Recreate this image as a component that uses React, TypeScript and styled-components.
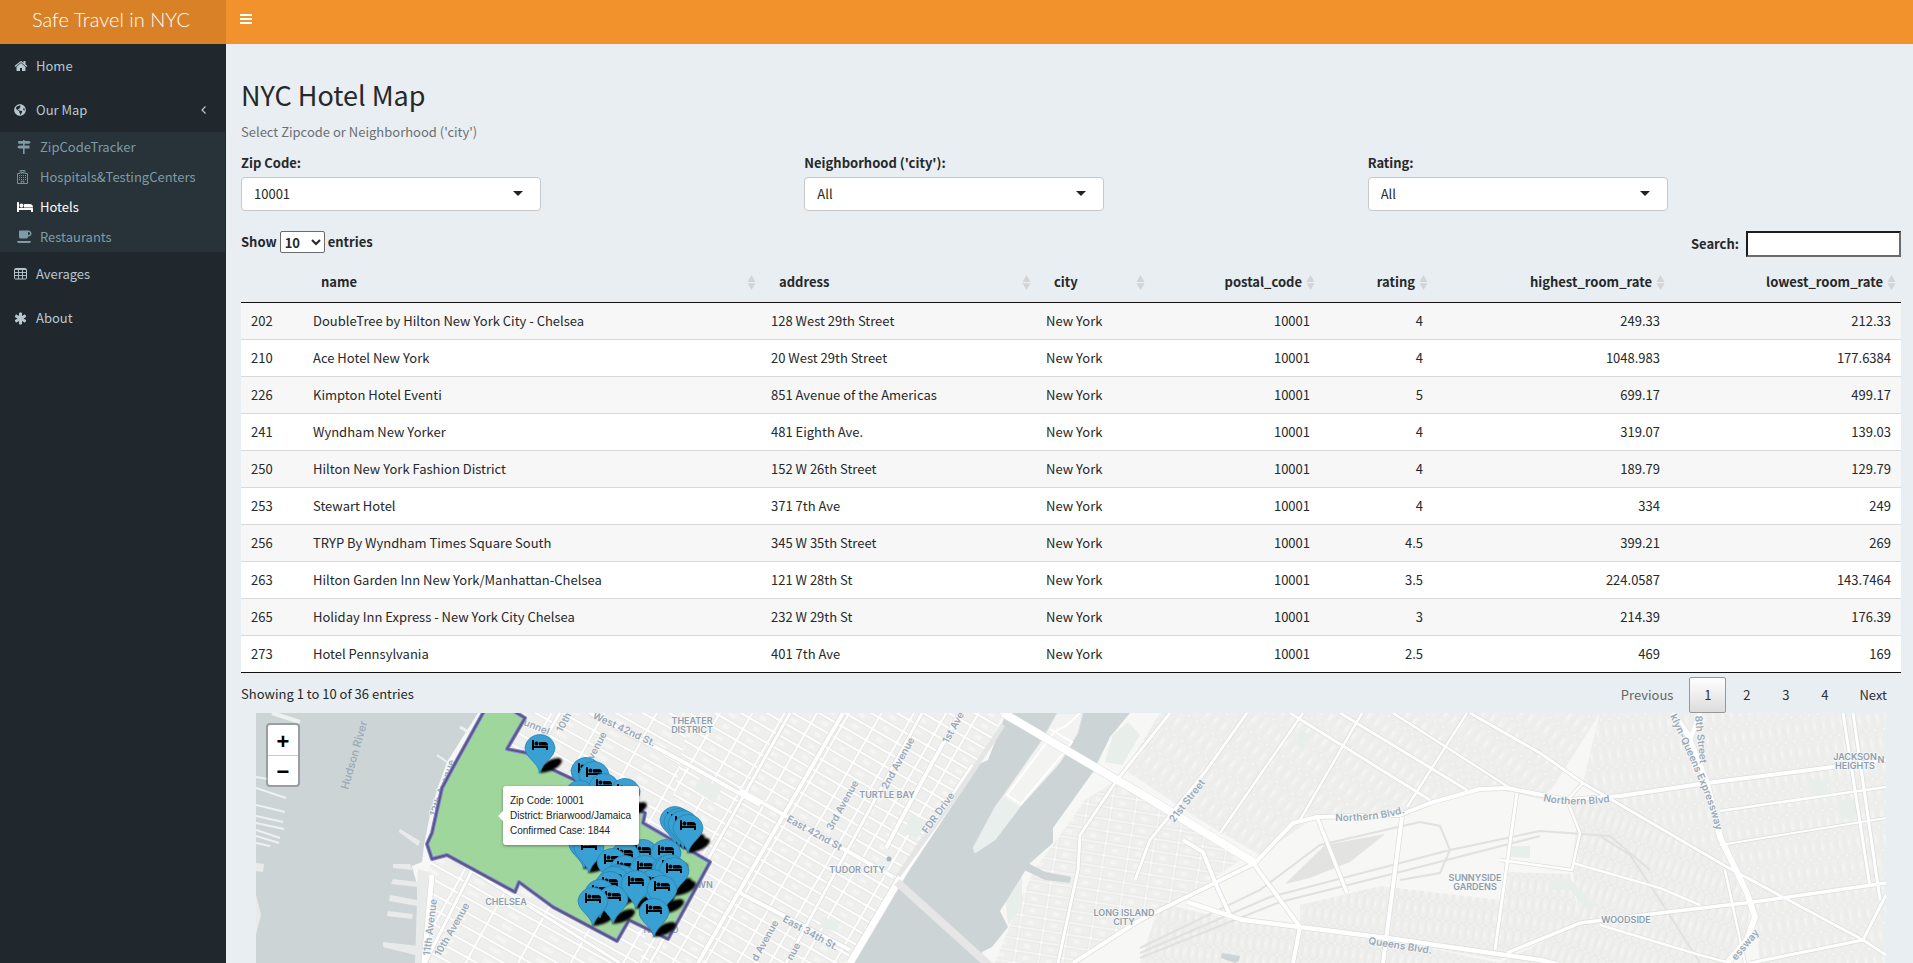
import React from "react";
import styled, { createGlobalStyle, css } from "styled-components";
import { FaGlobeAmericas } from "react-icons/fa";

const GlobalStyle = createGlobalStyle`
  *, *::before, *::after { box-sizing: border-box; }
  body {
    margin: 0;
    background: #e8eef2;
    color: #26282a;
    font-family: "Noto Sans CJK SC", "Noto Sans", sans-serif;
    font-size: 13px;
    line-height: 20px;
  }
  button, select, input { font: inherit; color: inherit; }
`;

const Page = styled.div`
  min-height: 100vh;
  display: grid;
  grid-template-columns: 226px minmax(0, 1fr);
  grid-template-rows: 44px 1fr;
`;

const Brand = styled.a`
  display: flex;
  align-items: center;
  justify-content: center;
  padding: 0 4px 6px 0;
  background: #d98127;
  color: #fff;
  font: 300 20px/24px Lato, sans-serif;
  text-decoration: none;
`;

const NavBar = styled.header`
  display: flex;
  align-items: flex-start;
  background: #f2922c;
`;

const ToggleButton = styled.button`
  display: flex;
  padding: 13px 14px;
  border: 0;
  background: none;
  color: #fff;
`;

const Sidebar = styled.nav`
  background: #20282e;
`;

const Menu = styled.ul`
  list-style: none;
  margin: 0;
  padding: 0;
`;

const SubMenu = styled(Menu)`
  margin-right: 1px;
  background: #273338;
`;

const itemLayout = css`
  display: flex;
  align-items: center;
  text-decoration: none;
`;

const MenuLink = styled.a`
  ${itemLayout}
  height: 44px;
  padding: 0 20px 0 14px;
  gap: 9px;
  color: #b8c7ce;
`;

const SubLink = styled.a<{ $active?: boolean }>`
  ${itemLayout}
  height: 30px;
  padding-left: 17px;
  gap: 7px;
  color: ${(p) => (p.$active ? "#fff" : "#7f9ba6")};
`;

const MenuLabel = styled.span`
  flex: 1;
`;

const IconBox = styled.span<{ $wide?: boolean }>`
  display: flex;
  width: ${(p) => (p.$wide ? 16 : 13)}px;
  svg { flex: none; }
`;

const Content = styled.main`
  display: flex;
  flex-direction: column;
  padding: 33px 12px 0 15px;
`;

const Title = styled.h2`
  margin: 0 0 9px;
  font-size: 27px;
  font-weight: 400;
  line-height: 36px;
`;

const HelpText = styled.p`
  margin: 0 0 11px;
  color: #6d6f71;
`;

const Filters = styled.div`
  display: grid;
  grid-template-columns: repeat(3, 1fr);
  margin: 0 -30px 20px 0;
`;

const Field = styled.div`
  display: flex;
  flex-direction: column;
  gap: 4px;
  label { font-weight: 700; }
`;

const SelectWrap = styled.div`
  position: relative;
  width: 300px;
  max-width: 90%;
  svg {
    position: absolute;
    top: 14px;
    right: 18px;
    pointer-events: none;
  }
`;

const SelectBox = styled.select`
  display: block;
  appearance: none;
  width: 100%;
  height: 34px;
  padding: 0 12px;
  border: 1px solid #c6c8ca;
  border-radius: 4px;
  background: #fff;
`;

const TableControls = styled.div`
  display: flex;
  justify-content: space-between;
  align-items: flex-start;
  padding-bottom: 5px;
  font-weight: 700;
`;

const LengthLabel = styled.label`
  display: flex;
  align-items: center;
  gap: 3px;
`;

const LengthSelect = styled.select`
  width: 45px;
  height: 22px;
  padding: 0;
  border: 1px solid #6b6b6b;
  border-radius: 2px;
  background: #fff;
`;

const SearchLabel = styled.label`
  display: flex;
  align-items: center;
  gap: 7px;
`;

const SearchInput = styled.input`
  width: 155px;
  height: 26px;
  border: 2px solid;
  border-color: #1c1c1c #6b6b6b #6b6b6b #1c1c1c;
  background: #fff;
`;

const DataTable = styled.table`
  width: 100%;
  table-layout: fixed;
  border-collapse: separate;
  border-spacing: 0;
  border-bottom: 1px solid #111;
`;

const HeadCell = styled.th`
  padding: 10px 5px 10px 18px;
  border-bottom: 1px solid #111;
`;

const SortButton = styled.button<{ $right?: boolean }>`
  display: flex;
  align-items: center;
  justify-content: ${(p) => (p.$right ? "flex-end" : "space-between")};
  gap: 4px;
  width: 100%;
  padding: 0;
  border: 0;
  background: none;
  font-weight: 700;
  svg { flex: none; }
`;

const Row = styled.tr`
  background: #fff;
  &:nth-child(odd) { background: #f7f7f7; }
  & + & td { border-top: 1px solid #d9d9d9; }
`;

const Cell = styled.td<{ $right?: boolean }>`
  padding: 8px 10px;
  text-align: ${(p) => (p.$right ? "right" : "left")};
  white-space: nowrap;
`;

const TableFooter = styled.div`
  display: flex;
  justify-content: space-between;
  padding-top: 4px;
`;

const Info = styled.div`
  padding: 7px 0;
`;

const Pager = styled.div`
  display: flex;
  gap: 2px;
`;

const PageButton = styled.button<{ $current?: boolean; $muted?: boolean }>`
  height: 36px;
  min-width: 37px;
  padding: 0 13px;
  border: 1px solid ${(p) => (p.$current ? "#979797" : "transparent")};
  border-radius: 2px;
  background: ${(p) => (p.$current ? "linear-gradient(#fff, #dcdcdc)" : "none")};
  color: ${(p) => (p.$muted ? "#666" : "#2f3133")};
`;

const MapPanel = styled.section`
  position: relative;
  flex: 1;
  min-height: 250px;
  margin: 0 15px;
  overflow: hidden;
  background: #f6f6f4;
`;

const MapDrawing = styled.svg`
  position: absolute;
  inset: 0;
  width: 100%;
  height: 100%;
`;

const ZoomControl = styled.div`
  position: absolute;
  top: 10px;
  left: 10px;
  display: flex;
  flex-direction: column;
  border: 2px solid rgba(0, 0, 0, 0.25);
  border-radius: 4px;
  background-clip: padding-box;
  background-color: #fff;
`;

const ZoomButton = styled.button`
  width: 30px;
  height: 30px;
  padding: 3px 0 0;
  border: 0;
  background: none;
  color: #000;
  font: bold 22px/26px "Liberation Sans", sans-serif;
  & + & { border-top: 1px solid #ccc; }
`;

const Tooltip = styled.div`
  position: absolute;
  top: 73px;
  left: 247px;
  padding: 7px 8px 7px 7px;
  border-radius: 3px;
  background: #fff;
  box-shadow: 0 1px 3px rgba(0, 0, 0, 0.4);
  color: #222;
  font: 10px/15px "Liberation Sans", sans-serif;
  white-space: nowrap;
  &::before {
    content: "";
    position: absolute;
    top: 24px;
    left: -11px;
    border: 6px solid transparent;
    border-right-color: #fff;
  }
`;

/* ---------- icons ---------- */

const PATHS = {
  home: "M1472 992v480q0 26-19 45t-45 19h-384v-384h-256v384h-384q-26 0-45-19t-19-45v-480q0-1 .5-3t.5-3l575-474 575 474q1 2 1 6zm223-69l-62 74q-8 9-21 11h-3q-13 0-21-7l-692-577-692 577q-12 8-24 7-13-2-21-11l-62-74q-8-10-7-23.5t11-21.5l719-599q32-26 76-26t76 26l244 204v-195q0-14 9-23t23-9h192q14 0 23 9t9 23v408l219 182q10 8 11 21.5t-7 23.5z",
  bed: "M256 1024h1728q26 0 45 19t19 45v448h-256v-256h-1536v256h-256v-1216q0-26 19-45t45-19h128q26 0 45 19t19 45v704zm576-320q0-106-75-181t-181-75-181 75-75 181 75 181 181 75 181-75 75-181zm1216 256v-64q0-159-112.5-271.5t-271.5-112.5h-704q-26 0-45 19t-19 45v384h1152z",
  asterisk:
    "M1546 1050q46 26 59.5 77.5t-12.5 97.5l-64 110q-26 46-77.5 59.5t-97.5-12.5l-266-153v307q0 52-38 90t-90 38h-128q-52 0-90-38t-38-90v-307l-266 153q-46 26-97.5 12.5t-77.5-59.5l-64-110q-26-46-12.5-97.5t59.5-77.5l266-154-266-154q-46-26-59.5-77.5t12.5-97.5l64-110q26-46 77.5-59.5t97.5 12.5l266 153v-307q0-52 38-90t90-38h128q52 0 90 38t38 90v307l266-153q46-26 97.5-12.5t77.5 59.5l64 110q26 46 12.5 97.5t-59.5 77.5l-266 154z",
  coffee:
    "M1664 448q0-80-56-136t-136-56h-64v384h64q80 0 136-56t56-136zm-1664 960h1792q0 106-75 181t-181 75h-1280q-106 0-181-75t-75-181zm1856-960q0 159-112.5 271.5t-271.5 112.5h-64v32q0 92-66 158t-158 66h-704q-92 0-158-66t-66-158v-736q0-26 19-45t45-19h1152q159 0 271.5 112.5t112.5 271.5z",
};

const HomeIcon = () => (
  <svg width="14" height="14" viewBox="64 0 1664 1792" fill="currentColor"><path d={PATHS.home} /></svg>
);
const BedIcon = () => (
  <svg width="16" height="14" viewBox="0 0 2048 1792" fill="currentColor"><path d={PATHS.bed} /></svg>
);
const AsteriskIcon = () => (
  <svg width="13" height="13" viewBox="64 64 1664 1664" fill="currentColor"><path d={PATHS.asterisk} /></svg>
);
const CoffeeIcon = () => (
  <svg width="15" height="14" viewBox="0 0 1920 1792" fill="currentColor"><path d={PATHS.coffee} /></svg>
);
const TableIcon = () => (
  <svg width="14" height="12" viewBox="0 0 14 12" fill="none" stroke="currentColor">
    <rect x=".5" y=".5" width="12" height="10.500" rx="1" />
    <path d="M4.500 1v10M8.500 1v10M1 1.500h11M1 4.500h11M1 7.500h11" strokeWidth=".9" />
  </svg>
);
const SignsIcon = () => (
  <svg width="14" height="14" viewBox="0 0 14 14" fill="currentColor">
    <path d="M6 0h1.600v1H12.200l1.500 1.300-1.500 1.500H1.200V1H6zM6 3.800h1.600V5.400h4.900v3H1.800L.2 6.900l1.600-1.500H6zM6 8.400h1.600V14H6z" />
    <path d="M0 4.600h14" stroke="#273338" strokeWidth="1" />
    <path d="M6 4h1.600v1.600H6z" />
  </svg>
);
const HospitalIcon = () => (
  <svg width="11" height="14" viewBox="0 0 11 14" fill="none" stroke="currentColor">
    <path d="M.5 13.500v-10h2.600v-3h4.800v3h2.600v10zM4.200 13.500v-2.300h2.600v2.300M4.600 1.400v2.400M6.400 1.400v2.400M4.600 2.600h1.800" strokeWidth=".9" />
    <path d="M2 5.600h7.600M2 7.600h7.600M2 9.600h7.600" strokeWidth="1" strokeDasharray="1 1" />
  </svg>
);
const BarsIcon = () => (
  <svg width="13" height="12" viewBox="0 0 13 12" fill="#fff"><path d="M0 1h12v2H0zM0 5h12v2H0zM0 9h12v2H0z" /></svg>
);
const ChevronIcon = () => (
  <svg width="5" height="8" viewBox="0 0 5 8" fill="none" stroke="currentColor" strokeWidth="1.200"><path d="M4.500.5L1 4l3.500 3.500" /></svg>
);
const CaretIcon = () => (
  <svg width="10" height="6" viewBox="0 0 10 6" fill="#222"><path d="M0 0h10L5 5z" /></svg>
);
const SortIcon = () => (
  <svg width="9" height="15" viewBox="0 0 9 15" fill="#d2d4d6"><path d="M4.500 0l4 7h-8zM.5 8.200h8l-4 6.800z" /></svg>
);

/* ---------- data ---------- */

const COLUMNS = [
  { name: "", width: 62 },
  { name: "name", width: 458 },
  { name: "address", width: 275 },
  { name: "city", width: 114 },
  { name: "postal_code", width: 170, right: true },
  { name: "rating", width: 113, right: true },
  { name: "highest_room_rate", width: 237, right: true },
  { name: "lowest_room_rate", width: 231, right: true },
];

const HOTELS = [
  ["202", "DoubleTree by Hilton New York City - Chelsea", "128 West 29th Street", "New York", "10001", "4", "249.33", "212.33"],
  ["210", "Ace Hotel New York", "20 West 29th Street", "New York", "10001", "4", "1048.983", "177.6384"],
  ["226", "Kimpton Hotel Eventi", "851 Avenue of the Americas", "New York", "10001", "5", "699.17", "499.17"],
  ["241", "Wyndham New Yorker", "481 Eighth Ave.", "New York", "10001", "4", "319.07", "139.03"],
  ["250", "Hilton New York Fashion District", "152 W 26th Street", "New York", "10001", "4", "189.79", "129.79"],
  ["253", "Stewart Hotel", "371 7th Ave", "New York", "10001", "4", "334", "249"],
  ["256", "TRYP By Wyndham Times Square South", "345 W 35th Street", "New York", "10001", "4.5", "399.21", "269"],
  ["263", "Hilton Garden Inn New York/Manhattan-Chelsea", "121 W 28th St", "New York", "10001", "3.5", "224.0587", "143.7464"],
  ["265", "Holiday Inn Express - New York City Chelsea", "232 W 29th St", "New York", "10001", "3", "214.39", "176.39"],
  ["273", "Hotel Pennsylvania", "401 7th Ave", "New York", "10001", "2.5", "469", "169"],
];

const FILTERS = [
  { id: "zip", label: "Zip Code:", value: "10001" },
  { id: "city", label: "Neighborhood ('city'):", value: "All" },
  { id: "rating", label: "Rating:", value: "All" },
];

/* ---------- map ---------- */

/* Street grids: id, block width, block height, rotation, street width */
const GRIDS: [string, number, number, number, number][] = [
  ["west", 46, 13, 29, 3],
  ["midtown", 28, 13, 30, 3],
  ["lic", 24, 12, 9, 2],
  ["astoria", 10, 24, 37, 1.6],
  ["sunny", 8, 18, 7, 1.5],
  ["wood", 8, 24, 19, 1.5],
  ["jackson", 9, 24, -8, 1.6],
];

const GRID_AREAS: [string, string][] = [
  ["west", "483,713 800,713 640,963 422,963 424,885 432,859 427,844 432,833 442,788"],
  ["midtown", "690,713 1003,713 986,752 968,772 897,882 850,963 640,963"],
  ["lic", "1053,845 1085,800 1117,780 1190,822 1240,860 1190,895 1150,915 1075,963 995,963 1010,925 1035,868"],
  ["astoria", "1125,770 1160,713 1600,713 1545,800 1480,786 1402,812 1317,816 1260,855 1200,820"],
  ["sunny", "1300,905 1380,886 1500,900 1600,915 1510,950 1500,960 1300,925"],
  ["sunny", "1160,903 1240,922 1300,930 1420,946 1500,963 1140,963"],
  ["sunny", "1508,872 1570,874 1580,920 1500,945"],
  ["wood", "1570,800 1610,798 1730,868 1750,905 1745,950 1727,963 1500,963 1580,923 1572,865 1576,830"],
  ["jackson", "1600,713 1886,713 1886,963 1760,963 1755,910 1730,868 1583,783"],
];

const MAJOR_ROADS: [number, string][] = [
  [4, "590,713 680,760 760,805"],
  [4, "843,713 740,890 698,963"],
  [3, "922,713 786,963"],
  [4, "960,713 905,812 886,848"],
  [3, "560,713 500,815 425,963"],
  [3, "790,713 650,963"],
  [4, "740,790 893,877"],
  [4, "740,893 850,950"],
  [3, "447,855 620,963"],
  [7, "974,766 905,870 850,963"],
  [5, "432,875 424,963"],
  [3, "1140,792 1117,780 1170,713"],
  [3, "1117,780 1080,835 1078,870 1058,963"],
  [3, "1247,713 1205,772 1150,840 1135,880"],
  [2.500, "1303,713 1220,833"],
  [2.500, "1362,713 1300,820"],
  [2.500, "1467,713 1407,807"],
  [3, "1290,713 1430,800"],
  [3, "1340,713 1467,790"],
  [2.500, "1393,713 1510,788"],
  [3, "1470,713 1540,753 1583,783 1727,867 1863,940 1886,955"],
  [4, "1073,963 1140,920 1255,863 1293,823 1317,817 1400,815 1430,803 1480,789 1507,788 1567,800 1620,796 1707,783 1833,767 1886,760"],
  [4.500, "1187,902 1243,920 1300,927 1387,938 1540,960 1560,965"],
  [4, "1253,863 1300,927 1293,963"],
  [4, "1183,840 1203,852 1217,887 1230,915"],
  [3.500, "1317,817 1347,893"],
  [4, "1402,817 1383,963"],
  [3, "1517,793 1495,950"],
  [2.500, "1500,860 1572,870 1580,833 1567,800 1583,783"],
  [2.500, "1573,863 1660,888 1700,905"],
  [3.500, "1507,953 1580,923 1660,913 1753,902 1886,883"],
  [3, "1843,713 1870,887"],
  [3, "1853,713 1880,900"],
  [2.500, "1720,811 1886,787"],
  [2, "1720,845 1886,818"],
  [3, "1886,895 1863,940 1750,963"],
  [2.500, "1725,870 1745,963"],
  [2.500, "1600,925 1700,955 1730,963"],
];

const RAIL_LINES = [
  "1140,953 1270,897 1450,850 1540,831 1610,836 1650,870",
  "1140,948 1260,890 1320,845 1420,822 1440,826 1450,850 1440,873 1400,880",
  "1140,958 1280,902 1400,872 1540,836",
  "1600,836 1630,855 1660,900 1700,963",
];

const ZIP_AREA =
  "489,703 483,713 457,760 442,788 432,833 427,844 432,859 447,855 515,892 519,882 553,907 617,941 629,920 668,939 710,862 643,823 645,813 547,767 527,753 507,749 525,718 512,710 505,703";

const LEFT_PIERS = [
  "256,777 268,779", "256,788 286,798", "256,805 285,812", "256,816 283,822",
  "256,823 284,829", "256,830 280,838", "256,836 279,843", "256,843 270,846",
];

const PIERS = [
  "393,879 418,882 418,887 391,884",
  "390,895 417,900 417,906 389,901",
  "388,911 413,914 412,919 387,916",
  "383,942 419,946 419,956 383,947",
  "393,864 410,864 413,870 393,868",
  "400,829 420,841 418,846 399,832",
  "418,869 428,872 426,963 415,963",
];

/* Neighbourhood names, centred on x */
const PLACES: [string, number, number][] = [
  ["THEATER", 692, 724], ["DISTRICT", 692, 733], ["CHELSEA", 506, 905], ["NOMAD", 661, 933],
  ["MIDTOWN", 690, 888], ["TURTLE BAY", 887, 798], ["TUDOR CITY", 857, 873],
  ["LONG ISLAND", 1124, 916], ["CITY", 1124, 925], ["SUNNYSIDE", 1475, 881], ["GARDENS", 1475, 890],
  ["JACKSON", 1855, 760], ["HEIGHTS", 1855, 769], ["N", 1881, 763], ["WOODSIDE", 1626, 923],
];

/* Street names: text, start x, start y, angle */
const STREETS: [string, number, number, number][] = [
  ["12th Avenue", 436, 817, -71], ["11th Avenue", 430, 956, -83], ["10th Avenue", 440, 957, -60],
  ["10th", 562, 733, -62], ["Avenue", 590, 766, -62], ["unnel", 523, 725, 22], ["West 42nd St.", 592, 718, 25],
  ["3rd Avenue", 832, 831, -61], ["2nd Avenue", 887, 790, -61], ["1st Ave", 948, 744, -61],
  ["FDR Drive", 927, 834, -54], ["East 42nd St", 786, 821, 29], ["East 34th St.", 782, 921, 29],
  ["d Avenue", 757, 962, -61], ["nue", 792, 961, -61], ["21st Street", 1174, 823, -52],
  ["Queens Blvd.", 1368, 944, 9], ["8th Street", 1695, 716, 84], ["essway", 1736, 961, -50],
];

/* Left edge and top of each marker's head, in drawing order */
const PINS: [number, number][] = [
  [540, 732], [586, 755], [594, 759], [580, 778], [604, 771], [625, 776],
  [675, 804], [679, 806], [683, 808], [688, 812],
  [584, 828], [589, 832],
  [643, 837], [666, 837], [625, 840], [612, 846], [625, 853], [645, 853], [667, 853], [670, 852], [674, 855],
  [618, 862], [622, 863], [614, 864], [653, 867], [610, 869], [636, 868], [662, 873], [600, 877], [613, 883], [593, 885], [654, 896],
];

const Pin = ({ x, y }: { x: number; y: number }) => (
  <g transform={`translate(${x} ${y})`}>
    <path d="M0 41C-3 29-15 26-15 15.200A15.200 15.200 0 0 1 15 15.200C15 26 3 29 0 41z" fill="#38a0d2" stroke="#2a83b3" strokeWidth=".8" />
    <svg x="-8" y="6" width="16" height="14" viewBox="0 0 2048 1792"><path d={PATHS.bed} /></svg>
  </g>
);

const BQE = "1672,713 1687,733 1707,783 1720,837 1747,893 1755,917 1747,940 1727,963";
const QUEENSBORO = "1003,713 1117,780 1140,793 1255,863";

const CityMap = () => (
  <MapDrawing viewBox="256 713 1630 250" preserveAspectRatio="xMinYMin slice" role="img" aria-label="Map of hotels in New York City">
    <defs>
      {GRIDS.map(([id, w, h, angle, gap]) => (
        <pattern key={id} id={id} width={w} height={h} patternUnits="userSpaceOnUse" patternTransform={`rotate(${angle})`}>
          <rect width={w} height={h} fill="#fefefe" />
          <rect x={gap / 2} y={gap / 2} width={w - gap} height={h - gap} fill="#efefee" stroke="#dfdfde" strokeWidth=".6" />
          <rect x={w * 0.3} y={h * 0.35} width={w * 0.25} height={h * 0.3} fill="#f5f5f4" />
        </pattern>
      ))}
      <filter id="soft" x="-30%" y="-30%" width="160%" height="160%"><feGaussianBlur stdDeviation="1" /></filter>
      <path id="northern1" d="M1335 821Q1385 822 1418 808" />
      <path id="northern2" d="M1543 801Q1580 809 1626 799" />
      <path id="bqe" d="M1670 716Q1688 755 1700 783Q1714 815 1720 850" />
    </defs>

    <rect x="256" y="713" width="1630" height="1000" fill="#f7f7f5" />
    {GRID_AREAS.map(([id, points]) => <polygon key={points} points={points} fill={`url(#${id})`} />)}

    <g fill="#e8eeea">
      <polygon points="1113,735 1128,722 1140,735 1122,765 1105,762" />
      <polygon points="912,814 928,822 917,838 903,833" />
      <polygon points="1300,730 1310,735 1303,748 1295,743" />
      <polygon points="1511,846 1530,846 1530,858 1510,857" />
      <polygon points="1550,880 1572,881 1594,905 1590,912 1570,890 1549,890" />
      <polygon points="1810,778 1828,782 1826,796 1810,792" />
      <polygon points="1005,895 1022,875 1022,905 1008,925" />
      <polygon points="700,778 722,788 714,803 694,790" />
      <polygon points="822,917 840,922 836,932 820,927" />
      <polygon points="1838,800 1860,800 1862,820 1842,818" />
    </g>

    {/* Hudson and East rivers */}
    <g fill="#cdd4d6">
      <polygon points="256,713 478,713 464,735 447,762 437,790 430,815 424,845 422,862 412,866 417,885 418,963 256,963" />
      <polygon points="1005,716 1003,713 1130,713 1110,737 1093,772 1053,828 1053,843 1030,863 1000,911 1008,927 992,947 982,952 983,963 850,963 900,880 973,767 988,760" />
      <polygon points="1026,862 1045,872 1071,877 1070,883 1045,880 1024,870" />
      <polygon points="1222,953 1240,956 1239,961 1235,963 1221,958" />
    </g>
    <g stroke="#eff1f1" strokeWidth="2" fill="none">
      {LEFT_PIERS.map((p) => <polyline key={p} points={p} />)}
      <polyline points="272,713 300,722" strokeWidth="4" />
      <polyline points="437,755 447,762" strokeWidth="2" />
      <polyline points="460,727 472,734" strokeWidth="3" />
    </g>
    <g fill="#e8ebea">
      {PIERS.map((p) => <polygon key={p} points={p} />)}
      <polygon points="256,863 264,864 263,872 256,871" />
      <polygon points="256,895 261,915 256,935" />
    </g>

    {/* Roosevelt Island */}
    <polygon points="1057,713 1083,713 1078,733 1060,763 1020,807 995,840 975,853 973,848 995,807 1007,790 1042,740" fill="#f3f3f2" stroke="#e2e3e3" />
    <polygon points="1003,796 1020,807 995,840 975,853 973,848 995,807" fill="#e9efec" />
    <polyline points="1080,713 1066,726 1055,731 1007,795 1021,804 1062,755 1072,742 1050,729" fill="none" stroke="#fff" strokeWidth="2" />

    <g fill="none" stroke="#e1e1e1" strokeWidth="2">
      {RAIL_LINES.map((p) => <polyline key={p} points={p} />)}
    </g>
    <polygon points="1285,884 1325,845 1385,834 1350,862 1310,878" fill="#e3e3e2" />

    <g fill="none" strokeLinejoin="round" stroke="#dcdddd">
      {MAJOR_ROADS.map(([w, p]) => <polyline key={p} points={p} strokeWidth={w + 1.400} />)}
      <polyline points={QUEENSBORO} strokeWidth="9" />
      <polyline points={BQE} strokeWidth="7" />
    </g>
    <g fill="none" strokeLinejoin="round" stroke="#fff">
      {MAJOR_ROADS.map(([w, p]) => <polyline key={p} points={p} strokeWidth={w} />)}
      <polyline points={QUEENSBORO} strokeWidth="8" />
      <polyline points={BQE} strokeWidth="6" />
      <polyline points="1700,713 1690,740" strokeWidth="4" />
    </g>
    <polyline points="897,882 990,966" stroke="#e6e6e6" strokeWidth="8" />
    <polyline points="1003,725 980,760 960,790 898,876" fill="none" stroke="#e4e5e5" strokeWidth="5" />

    <g fontFamily="Inter, sans-serif" fill="#98a9b7" stroke="#f8f8f7" strokeWidth="1.500" paintOrder="stroke">
      <text x="348" y="790" fontSize="11" fontWeight="500" transform="rotate(-74 348 790)" stroke="none">Hudson River</text>
      <g fontSize="10" fontWeight="600">
        {STREETS.map(([t, x, y, a]) => <text key={t + x} x={x} y={y} transform={`rotate(${a} ${x} ${y})`}>{t}</text>)}
        <text><textPath href="#northern1">Northern Blvd.</textPath></text>
        <text><textPath href="#northern2">Northern Blvd</textPath></text>
        <text><textPath href="#bqe">klyn-Queens Expressway</textPath></text>
      </g>
      <g fontSize="9" fontWeight="600" fill="#8b9eae" textAnchor="middle">
        {PLACES.map(([t, x, y]) => <text key={t + y} x={x} y={y}>{t}</text>)}
      </g>
    </g>
    <circle cx="889" cy="859" r="2.500" fill="#a9b5bd" />

    <polygon points={ZIP_AREA} fill="#9bd497" fillOpacity=".96" stroke="#8484ee" strokeWidth="4" strokeLinejoin="round" />
    <polygon points={ZIP_AREA} fill="none" stroke="#5c5a6c" strokeWidth="2" strokeLinejoin="round" />

    <g filter="url(#soft)">
      {PINS.map(([x, y]) => (
        <path key={`${x}-${y}`} transform={`translate(${x} ${y})`} d="M-1 41L3 33Q10 26 19 26Q25 28 19 34Q12 40-1 41z" />
      ))}
    </g>
    {PINS.map(([x, y]) => <Pin key={`${x}-${y}`} x={x} y={y} />)}
  </MapDrawing>
);

export default function App() {
  return (
    <>
      <GlobalStyle />
      <Page>
        <Brand href="#">Safe Travel in NYC</Brand>
        <NavBar>
          <ToggleButton aria-label="Toggle navigation"><BarsIcon /></ToggleButton>
        </NavBar>

        <Sidebar>
          <Menu>
            <li><MenuLink href="#home"><IconBox><HomeIcon /></IconBox><MenuLabel>Home</MenuLabel></MenuLink></li>
            <li>
              <MenuLink href="#map"><IconBox><FaGlobeAmericas size={12} /></IconBox><MenuLabel>Our Map</MenuLabel><ChevronIcon /></MenuLink>
              <SubMenu>
                <li><SubLink href="#zip"><IconBox $wide><SignsIcon /></IconBox>ZipCodeTracker</SubLink></li>
                <li><SubLink href="#hospitals"><IconBox $wide><HospitalIcon /></IconBox>Hospitals&amp;TestingCenters</SubLink></li>
                <li><SubLink href="#hotels" $active><IconBox $wide><BedIcon /></IconBox>Hotels</SubLink></li>
                <li><SubLink href="#restaurants"><IconBox $wide><CoffeeIcon /></IconBox>Restaurants</SubLink></li>
              </SubMenu>
            </li>
            <li><MenuLink href="#averages"><IconBox><TableIcon /></IconBox><MenuLabel>Averages</MenuLabel></MenuLink></li>
            <li><MenuLink href="#about"><IconBox><AsteriskIcon /></IconBox><MenuLabel>About</MenuLabel></MenuLink></li>
          </Menu>
        </Sidebar>

        <Content>
          <Title>NYC Hotel Map</Title>
          <HelpText>Select Zipcode or Neighborhood ('city')</HelpText>

          <Filters>
            {FILTERS.map((f) => (
              <Field key={f.id}>
                <label htmlFor={f.id}>{f.label}</label>
                <SelectWrap>
                  <SelectBox id={f.id}><option>{f.value}</option></SelectBox>
                  <CaretIcon />
                </SelectWrap>
              </Field>
            ))}
          </Filters>

          <TableControls>
            <LengthLabel>
              Show
              <LengthSelect><option>10</option></LengthSelect>
              entries
            </LengthLabel>
            <SearchLabel>Search:<SearchInput type="search" /></SearchLabel>
          </TableControls>

          <DataTable>
            <colgroup>
              {COLUMNS.map((c) => <col key={c.name} width={c.width} />)}
            </colgroup>
            <thead>
              <tr>
                {COLUMNS.map((c) => (
                  <HeadCell key={c.name} scope="col">
                    {c.name && <SortButton $right={c.right}>{c.name}<SortIcon /></SortButton>}
                  </HeadCell>
                ))}
              </tr>
            </thead>
            <tbody>
              {HOTELS.map((hotel) => (
                <Row key={hotel[0]}>
                  {hotel.map((value, i) => <Cell key={i} $right={COLUMNS[i].right}>{value}</Cell>)}
                </Row>
              ))}
            </tbody>
          </DataTable>

          <TableFooter>
            <Info>Showing 1 to 10 of 36 entries</Info>
            <Pager>
              <PageButton $muted>Previous</PageButton>
              <PageButton $current>1</PageButton>
              <PageButton>2</PageButton>
              <PageButton>3</PageButton>
              <PageButton>4</PageButton>
              <PageButton>Next</PageButton>
            </Pager>
          </TableFooter>

          <MapPanel>
            <CityMap />
            <ZoomControl>
              <ZoomButton aria-label="Zoom in">+</ZoomButton>
              <ZoomButton aria-label="Zoom out">−</ZoomButton>
            </ZoomControl>
            <Tooltip>
              Zip Code: 10001<br />
              District: Briarwood/Jamaica<br />
              Confirmed Case: 1844
            </Tooltip>
          </MapPanel>
        </Content>
      </Page>
    </>
  );
}
